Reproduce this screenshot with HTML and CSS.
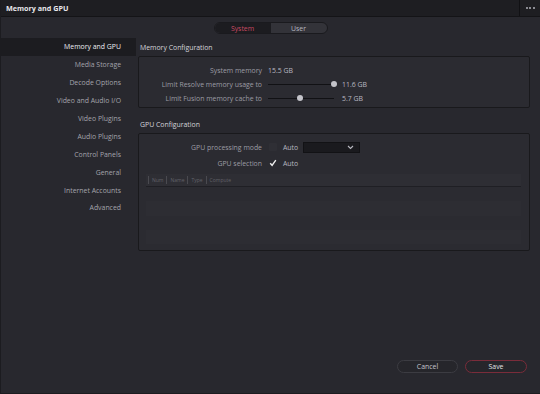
FILE: index.html
```html
<!DOCTYPE html>
<html>
<head>
<meta charset="utf-8">
<link rel="stylesheet" href="styles.css">
</head>
<body>
<div class="app">
  <div class="titlebar">
    <div class="title">Memory and GPU</div>
    <div class="more"><span></span><span></span><span></span></div>
  </div>
  <div class="tabs-row">
    <div class="tabs">
      <div class="tab active">System</div>
      <div class="tab">User</div>
    </div>
  </div>
  <div class="main">
    <nav class="sidebar">
      <div class="nav-item selected">Memory and GPU</div>
      <div class="nav-item">Media Storage</div>
      <div class="nav-item">Decode Options</div>
      <div class="nav-item">Video and Audio I/O</div>
      <div class="nav-item">Video Plugins</div>
      <div class="nav-item">Audio Plugins</div>
      <div class="nav-item">Control Panels</div>
      <div class="nav-item">General</div>
      <div class="nav-item">Internet Accounts</div>
      <div class="nav-item">Advanced</div>
    </nav>
    <div class="content">
      <div class="section-title">Memory Configuration</div>
      <div class="box mem">
        <div class="row">
          <div class="label">System memory</div>
          <div class="value">15.5 GB</div>
        </div>
        <div class="row">
          <div class="label">Limit Resolve memory usage to</div>
          <div class="slider"><div class="track"></div><div class="knob k1"></div></div>
          <div class="value">11.6 GB</div>
        </div>
        <div class="row">
          <div class="label">Limit Fusion memory cache to</div>
          <div class="slider"><div class="track"></div><div class="knob k2"></div></div>
          <div class="value">5.7 GB</div>
        </div>
      </div>
      <div class="section-title">GPU Configuration</div>
      <div class="box gpu">
        <div class="row grow">
          <div class="label">GPU processing mode</div>
          <div class="check"></div>
          <div class="value">Auto</div>
          <div class="select"><svg width="7" height="5" viewBox="0 0 7 5"><path d="M1 1 L3.5 3.5 L6 1" fill="none" stroke="#b8b8c0" stroke-width="1.1"/></svg></div>
        </div>
        <div class="row grow">
          <div class="label">GPU selection</div>
          <div class="check checked"><svg width="8" height="8" viewBox="0 0 8 8"><path d="M1.2 4.3 L3.1 6.3 L6.8 1.2" fill="none" stroke="#f0f0f0" stroke-width="1.4"/></svg></div>
          <div class="value">Auto</div>
        </div>
        <div class="table">
          <div class="thead">
            <span class="th">Num</span><span class="th">Name</span><span class="th">Type</span><span class="th">Compute</span>
          </div>
          <div class="tbody">
            <div class="tr"></div><div class="tr alt"></div><div class="tr"></div><div class="tr alt"></div>
          </div>
        </div>
      </div>
    </div>
  </div>
  <div class="footer">
    <div class="btn">Cancel</div>
    <div class="btn save">Save</div>
  </div>
</div>
</body>
</html>
```
FILE: styles.css
```css
* { box-sizing: border-box; }
html, body { margin: 0; padding: 0; }
body {
  width: 540px;
  height: 394px;
  background: #28282e;
  font-family: "Open Sans", "Noto Sans", sans-serif;
  font-size: 6.9px;
  color: #a4a4ac;
  overflow: hidden;
}
.app {
  width: 540px;
  height: 394px;
  display: flex;
  flex-direction: column;
  border-left: 1px solid #1c1c20;
  border-bottom: 1px solid #1c1c20;
}
.titlebar {
  height: 17px;
  background: #1e1e22;
  border-bottom: 1px solid #141417;
  display: flex;
  align-items: center;
  justify-content: space-between;
}
.title {
  padding-left: 5px;
  color: #e8e8ec;
  font-weight: 700;
  font-size: 7.2px;
}
.more {
  height: 100%;
  width: 21px;
  border-left: 1px solid #111114;
  display: flex;
  align-items: center;
  justify-content: center;
  gap: 1.5px;
}
.more span {
  width: 2px;
  height: 2px;
  border-radius: 50%;
  background: #b0b0b8;
}
.tabs-row {
  height: 21px;
  display: flex;
  justify-content: center;
  align-items: center;
  padding-top: 1px;
}
.tabs {
  display: flex;
  width: 114px;
  height: 12px;
  border-radius: 6px;
  border: 1px solid #1a1a1e;
  background: #333339;
  overflow: hidden;
}
.tab {
  flex: 1;
  display: flex;
  align-items: center;
  justify-content: center;
  color: #b8b8c0;
}
.tab.active {
  background: #1c1c20;
  color: #c84a62;
}
.main {
  flex: 1;
  display: flex;
  min-height: 0;
}
.sidebar {
  width: 135px;
  flex: none;
  display: flex;
  flex-direction: column;
}
.nav-item {
  height: 17.9px;
  display: flex;
  align-items: center;
  justify-content: flex-end;
  padding-right: 15px;
  color: #a4a4ac;
}
.nav-item.selected {
  background: #1c1c20;
  color: #ececf0;
}
.content {
  flex: 1;
  padding-left: 2px;
  padding-right: 10px;
  display: flex;
  flex-direction: column;
}
.section-title {
  height: 18px;
  display: flex;
  align-items: center;
  padding-left: 2px;
  color: #d4d4da;
}
.box {
  background: #2b2b31;
  border: 1px solid #19191c;
  border-radius: 2px;
}
.box.mem {
  height: 52px;
  padding-top: 6px;
  margin-bottom: 7px;
}
.box.gpu {
  height: 118px;
  padding-top: 5px;
}
.row {
  height: 14px;
  display: flex;
  align-items: center;
}
.row.grow { height: 16px; }
.label {
  width: 129px;
  flex: none;
  text-align: right;
  padding-right: 6px;
  color: #9c9ca4;
}
.value { color: #b8b8c0; }
.slider {
  position: relative;
  width: 70px;
  height: 6px;
  margin-right: 4px;
}
.track {
  position: absolute;
  left: 0;
  right: 4px;
  top: 2.5px;
  height: 1px;
  background: #111114;
}
.knob {
  position: absolute;
  top: 0;
  width: 6px;
  height: 6px;
  border-radius: 50%;
  background: #c4c4ca;
}
.k1 { left: 63px; }
.k2 { left: 29px; }
.check {
  width: 8px;
  height: 8px;
  margin-left: 1px;
  margin-right: 6px;
  border-radius: 1px;
  background: #2f2f35;
  display: flex;
  align-items: center;
  justify-content: center;
}
.check.checked { background: transparent; }
.select {
  width: 57px;
  height: 11px;
  margin-left: 5px;
  background: #1a1a1e;
  border: 1px solid #121215;
  display: flex;
  align-items: center;
  justify-content: flex-end;
  padding-right: 5px;
}
.table {
  margin: 3px 8px 0 7px;
}
.thead {
  height: 13px;
  background: #2e2e34;
  display: flex;
  align-items: center;
  padding-left: 2px;
  border-bottom: 1px solid #1f1f24;
  font-size: 5px;
  color: #62626a;
}
.th {
  border-left: 1px solid #4a4a50;
  padding: 0 3px;
  line-height: 8px;
}
.tbody {
  height: 57px;
  display: flex;
  flex-direction: column;
}
.tr { flex: 1; background: #2b2b31; }
.tr.alt { background: #2d2d33; }
.footer {
  height: 45px;
  display: flex;
  justify-content: flex-end;
  align-items: flex-start;
  gap: 7px;
  padding-right: 13px;
  padding-top: 12px;
}
.btn {
  width: 61px;
  height: 13px;
  border-radius: 7px;
  border: 1px solid #3c3c42;
  background: #26262b;
  color: #c4c4cc;
  display: flex;
  align-items: center;
  justify-content: center;
}
.btn.save {
  width: 62px;
  border-color: #7a2c3a;
  color: #e0e0e4;
}
```
